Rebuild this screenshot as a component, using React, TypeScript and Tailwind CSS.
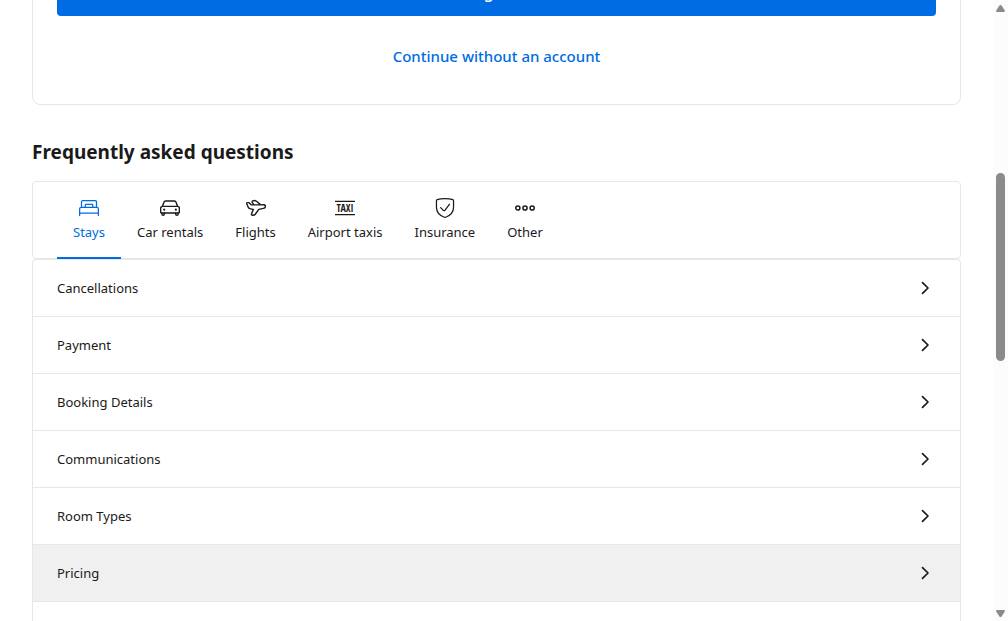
import { useState } from "react";
import type { ReactNode } from "react";

const stroke = {
  fill: "none",
  stroke: "currentColor",
  strokeWidth: 1.5,
  strokeLinecap: "round",
  strokeLinejoin: "round",
} as const;

function Icon({ children }: { children: ReactNode }) {
  return (
    <svg viewBox="0 0 24 24" className="size-5" aria-hidden="true">
      {children}
    </svg>
  );
}

const tabs = [
  {
    label: "Stays",
    icon: (
      <Icon>
        <path
          fill="currentColor"
          d="M2.75 12h18.5c.69 0 1.25.56 1.25 1.25V18l.75-.75H.75l.75.75v-4.75c0-.69.56-1.25 1.25-1.25m0-1.5A2.75 2.75 0 0 0 0 13.25V18c0 .414.336.75.75.75h22.5A.75.75 0 0 0 24 18v-4.75a2.75 2.75 0 0 0-2.75-2.75zM0 18v3a.75.75 0 0 0 1.5 0v-3A.75.75 0 0 0 0 18m22.5 0v3a.75.75 0 0 0 1.5 0v-3a.75.75 0 0 0-1.5 0m-.75-6.75V4.5a2.25 2.25 0 0 0-2.25-2.25h-15A2.25 2.25 0 0 0 2.25 4.5v6.75a.75.75 0 0 0 1.5 0V4.5a.75.75 0 0 1 .75-.75h15a.75.75 0 0 1 .75.75v6.75a.75.75 0 0 0 1.5 0m-13.25-3h7a.25.25 0 0 1 .25.25v2.75l.75-.75h-9l.75.75V8.5a.25.25 0 0 1 .25-.25m0-1.5A1.75 1.75 0 0 0 6.75 8.5v2.75c0 .414.336.75.75.75h9a.75.75 0 0 0 .75-.75V8.5a1.75 1.75 0 0 0-1.75-1.75z"
        />
      </Icon>
    ),
  },
  {
    label: "Car rentals",
    icon: (
      <Icon>
        <g {...stroke} strokeWidth={1.7}>
          <path d="M3 10h18a2.25 2.25 0 0 1 2.25 2.25V16.5a1.5 1.5 0 0 1-1.5 1.5H2.25a1.5 1.5 0 0 1-1.5-1.5v-4.25A2.25 2.25 0 0 1 3 10z" />
          <path d="M3 10l1.7-4.9A2.25 2.25 0 0 1 6.85 3.5h10.3a2.25 2.25 0 0 1 2.15 1.6L21 10M2.25 18v1.1a1.5 1.5 0 0 0 3 0V18M18.75 18v1.1a1.5 1.5 0 0 0 3 0V18" />
        </g>
        <circle cx="5" cy="14" r="1.3" fill="currentColor" />
        <circle cx="19" cy="14" r="1.3" fill="currentColor" />
      </Icon>
    ),
  },
  {
    label: "Flights",
    icon: (
      <Icon>
        <path
          {...stroke}
          strokeWidth={1.7}
          d="M8.8 13.6L5.4 13.1A3.4 3.4 0 0 1 2.8 11.3L.9 6.8C.6 6 1 5.5 1.7 5.5h1.7L6.2 8.1l3.5.1L7.6 5.6C7 4.8 7.3 3.9 8.2 3.5c1.4-.6 3-.5 4.3.4l5.2 4.3 3.2-.2c1.5 0 2.4.8 2.4 1.9 0 1.3-1 2.2-2.4 2.5l-5.5 1.3-4.3 5.8c-.7.9-1.8 1.3-3.4 1.2-.9 0-1.4-.7-1.1-1.5l2.2-5.6zM9.7 8.2l8-.0"
        />
      </Icon>
    ),
  },
  {
    label: "Airport taxis",
    icon: (
      <Icon>
        <path {...stroke} strokeLinecap="butt" d="M0 4h24M0 20h24" />
        <text
          x="12"
          y="16.4"
          textAnchor="middle"
          fill="currentColor"
          fontSize="12"
          fontWeight="700"
          fontFamily="'Liberation Sans Narrow', 'Open Sans Condensed', 'DejaVu Sans Condensed', sans-serif"
        >
          TAXI
        </text>
      </Icon>
    ),
  },
  {
    label: "Insurance",
    icon: (
      <Icon>
        <path
          {...stroke}
          d="M1.75 3.25V11c0 5.6 4.1 10 9.5 12.1.5.2 1 .2 1.5 0C18.2 21 22.25 16.6 22.25 11V3.25a1.5 1.5 0 0 0-.9-1.4C18.4.9 15.2.8 12 .8S5.6.9 2.65 1.85a1.5 1.5 0 0 0-.9 1.4zM17.25 7.5l-5.4 7.2a1.2 1.2 0 0 1-1.8.1L6.75 11.5"
        />
      </Icon>
    ),
  },
  {
    label: "Other",
    icon: (
      <Icon>
        <g {...stroke} strokeWidth={1.8}>
          <circle cx="3.4" cy="12" r="2.5" />
          <circle cx="12" cy="12" r="2.5" />
          <circle cx="20.6" cy="12" r="2.5" />
        </g>
      </Icon>
    ),
  },
];

const topics = [
  "Cancellations",
  "Payment",
  "Booking Details",
  "Communications",
  "Room Types",
  "Pricing",
];

export default function App() {
  const [active, setActive] = useState("Stays");

  return (
    <div className="flex h-screen overflow-hidden bg-white font-['Segoe_UI','Noto_Sans',sans-serif] text-[#1a1a1a]">
      <main className="flex min-w-0 flex-1 flex-col overflow-hidden px-8">
        <section className="-mt-[57px] flex flex-col gap-4 rounded-lg border border-[#e7e7e7] p-6">
          <button className="h-12 shrink-0 rounded bg-[#006ce4] text-base font-medium text-white">
            Sign in
          </button>
          <a
            href="#guest"
            className="flex h-12 items-center justify-center text-[15px] font-medium text-[#006ce4]"
          >
            Continue without an account
          </a>
        </section>

        <h1 className="mt-8 mb-4 pt-0.5 text-[19px] leading-[26px] font-bold">
          Frequently asked questions
        </h1>

        <div role="tablist" className="flex rounded border border-[#e7e7e7] px-6">
          {tabs.map(({ label, icon }) => (
            <button
              key={label}
              role="tab"
              aria-selected={active === label}
              onClick={() => setActive(label)}
              className={`-mb-px flex flex-col items-center gap-1 border-b-2 px-4 pt-4 pb-[15px] text-[13px] leading-5 ${
                active === label
                  ? "border-[#006ce4] text-[#006ce4]"
                  : "border-transparent"
              }`}
            >
              {icon}
              {label}
            </button>
          ))}
        </div>

        <ul className="flex-1 rounded-t border border-b-0 border-[#e7e7e7]">
          {topics.map((topic) => (
            <li key={topic} className="border-b border-[#e7e7e7]">
              <button
                className={`flex h-14 w-full items-center justify-between pr-[23px] pl-6 text-left text-[13px] ${
                  topic === "Pricing" ? "bg-[#f0f0f0]" : "hover:bg-[#f0f0f0]"
                }`}
              >
                <span className="pt-0.5">{topic}</span>
                <svg viewBox="0 0 24 24" className="size-6" aria-hidden="true">
                  <path {...stroke} strokeWidth={1.7} d="M9.5 6.6L15 12l-5.5 5.4" />
                </svg>
              </button>
            </li>
          ))}
        </ul>
      </main>

      <div
        aria-hidden="true"
        className="flex w-[15px] shrink-0 flex-col items-center bg-[#fcfcfc] py-1 text-[#8b8b8b]"
      >
        <svg viewBox="0 0 9 8" className="h-2 w-[9px]">
          <path d="M4.5 1Q5.2 1 5.6 1.6L8.8 6.6Q9.2 8 8 8H1Q-.2 8 .2 6.6L3.4 1.6Q3.8 1 4.5 1z" fill="currentColor" />
        </svg>
        <div className="flex w-[9px] flex-1 flex-col">
          <div className="grow-[161]" />
          <div className="grow-[188] rounded-full bg-[#8b8b8b]" />
          <div className="grow-[248]" />
        </div>
        <svg viewBox="0 0 9 8" className="h-2 w-[9px]">
          <path d="M4.5 8Q5.2 8 5.6 7.4L8.8 2.4Q9.2 1 8 1H1Q-.2 1 .2 2.4L3.4 7.4Q3.8 8 4.5 8z" fill="currentColor" />
        </svg>
      </div>
    </div>
  );
}
